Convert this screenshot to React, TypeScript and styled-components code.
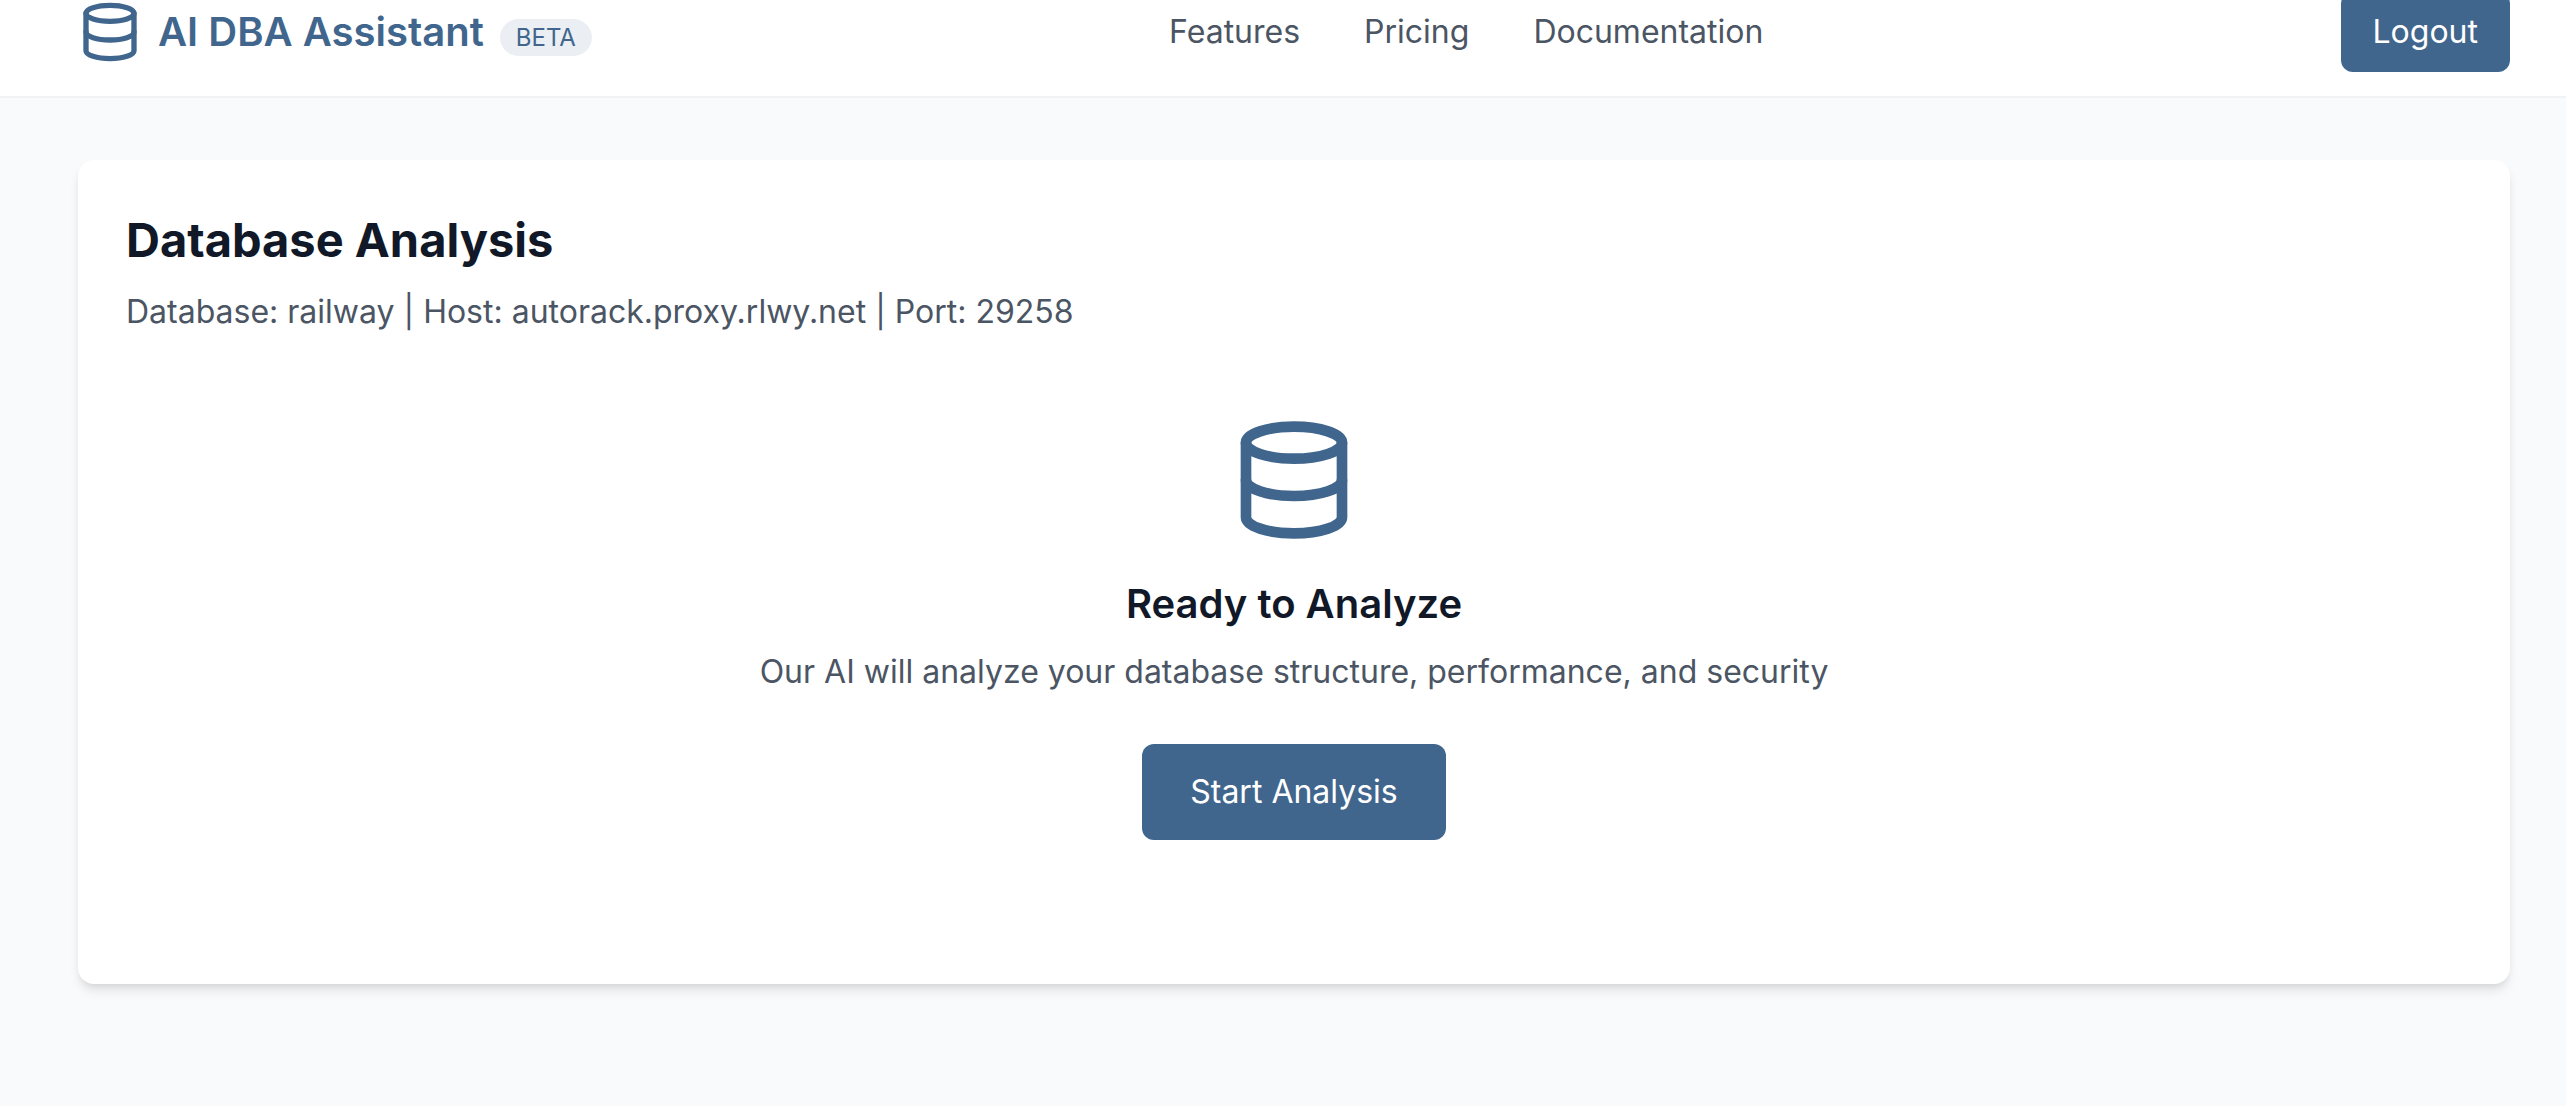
import React from "react";
import styled, { createGlobalStyle } from "styled-components";
import { Database } from "lucide-react";

const BRAND = "#41668d";

const GlobalStyle = createGlobalStyle`
  *, *::before, *::after { box-sizing: border-box; }
  body {
    margin: 0;
    background: #f9fafc;
    color: #111827;
    font-family: Inter, "Liberation Sans", sans-serif;
    font-size: 32px;
    line-height: 48px;
    -webkit-font-smoothing: antialiased;
  }
  h1, h2, p { margin: 0; }
  a { color: inherit; text-decoration: none; }
`;

const Page = styled.div`
  margin-top: -32px;
`;

const Header = styled.header`
  display: flex;
  align-items: center;
  justify-content: space-between;
  padding: 24px 56px 24px 78px;
  background: #fff;
  border-bottom: 2px solid #f1f2f5;
`;

const Brand = styled.a`
  display: flex;
  align-items: center;
  gap: 16px;
  color: ${BRAND};
`;

const BrandName = styled.span`
  font-size: 40px;
  font-weight: 600;
  line-height: 56px;
`;

const Badge = styled.span`
  margin-left: 16px;
  padding: 4px 16px;
  border-radius: 999px;
  background: #ebeff4;
  font-size: 24px;
  font-weight: 400;
  line-height: 32px;
`;

const Nav = styled.nav`
  display: flex;
  gap: 64px;
  color: #4b5563;
`;

const Button = styled.button<{ $large?: boolean }>`
  padding: ${(p) => (p.$large ? "24px 48px" : "16px 32px")};
  border: 0;
  border-radius: 12px;
  background: ${BRAND};
  color: #fff;
  font: inherit;
  cursor: pointer;
`;

const Main = styled.main`
  padding: 62px 56px 120px 78px;
`;

const Card = styled.section`
  padding: 48px;
  border-radius: 16px;
  background: #fff;
  box-shadow: 0 8px 12px -2px rgba(0, 0, 0, 0.1), 0 4px 8px -4px rgba(0, 0, 0, 0.1);
`;

const Title = styled.h1`
  font-size: 47px;
  font-weight: 700;
  line-height: 64px;
`;

const Text = styled.p`
  margin-top: 16px;
  color: #4b5563;
`;

const Ready = styled.div`
  display: flex;
  flex-direction: column;
  align-items: center;
  padding: 80px 0 96px;
  text-align: center;

  svg { color: ${BRAND}; }
  button { margin-top: 48px; }
`;

const Subtitle = styled.h2`
  margin-top: 32px;
  font-size: 40px;
  font-weight: 600;
  line-height: 56px;
`;

export default function App() {
  return (
    <>
      <GlobalStyle />
      <Page>
        <Header>
          <Brand href="#">
            <Database size={64} />
            <BrandName>
              AI DBA Assistant<Badge>BETA</Badge>
            </BrandName>
          </Brand>
          <Nav>
            <a href="#features">Features</a>
            <a href="#pricing">Pricing</a>
            <a href="#documentation">Documentation</a>
          </Nav>
          <Button type="button">Logout</Button>
        </Header>
        <Main>
          <Card>
            <Title>Database Analysis</Title>
            <Text>Database: railway | Host: autorack.proxy.rlwy.net | Port: 29258</Text>
            <Ready>
              <Database size={128} />
              <Subtitle>Ready to Analyze</Subtitle>
              <Text>Our AI will analyze your database structure, performance, and security</Text>
              <Button type="button" $large>Start Analysis</Button>
            </Ready>
          </Card>
        </Main>
      </Page>
    </>
  );
}
